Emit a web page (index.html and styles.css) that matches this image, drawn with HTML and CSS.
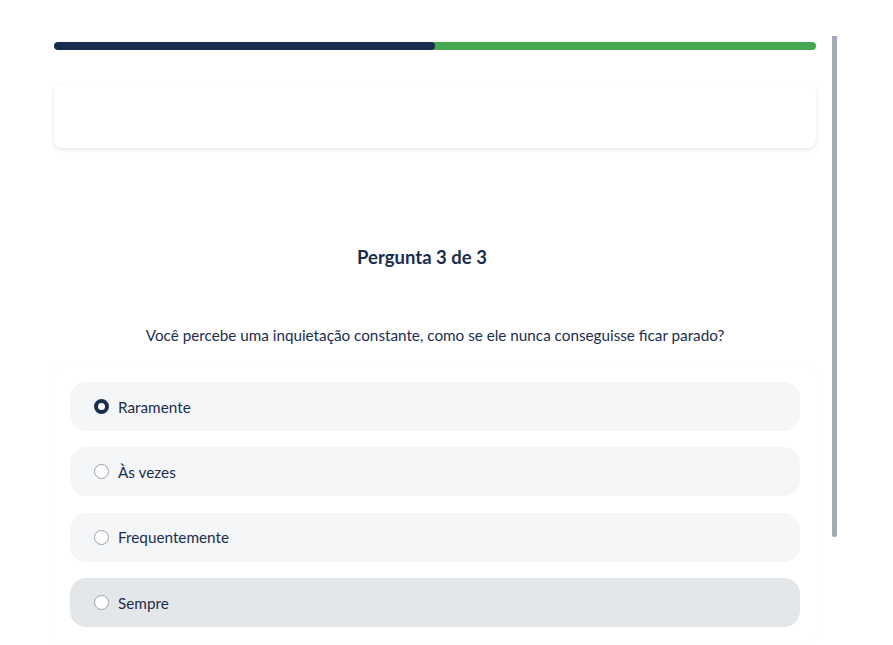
FILE: index.html
```html
<!DOCTYPE html>
<html lang="pt">
<head>
<meta charset="utf-8">
<link rel="stylesheet" href="styles.css">
</head>
<body>
<div class="page">
  <div class="progress"><div class="progress-fill" style="width:50%"></div></div>
  <div class="card-top"></div>
  <h2 class="title">Pergunta 3 de 3</h2>
  <p class="question">Você percebe uma inquietação constante, como se ele nunca conseguisse ficar parado?</p>
  <div class="options">
    <label class="option"><span class="radio checked"></span><span class="label">Raramente</span></label>
    <label class="option"><span class="radio"></span><span class="label">Às vezes</span></label>
    <label class="option"><span class="radio"></span><span class="label">Frequentemente</span></label>
    <label class="option hover"><span class="radio"></span><span class="label">Sempre</span></label>
  </div>
</div>
<div class="scroll-thumb"></div>
</body>
</html>
```
FILE: styles.css
```css
html, body { margin: 0; padding: 0; background: #fff; }
body {
  font-family: "Lato", "Noto Sans", sans-serif;
  color: #1b2d4f;
  width: 893px; height: 645px; overflow: hidden; position: relative;
}
.page {
  width: 762px;
  margin-left: 54px;
  padding-top: 42px;
}
.progress {
  height: 8px;
  background: #45a74f;
  border-radius: 4px;
  overflow: hidden;
}
.progress-fill {
  height: 100%;
  background: #1b2d4f;
  border-radius: 4px;
}
.card-top {
  margin-top: 34px;
  height: 64px;
  background: #fff;
  border-radius: 8px;
  box-shadow: 0 2px 5px rgba(0,0,0,0.09), 0 0 1px rgba(0,0,0,0.07);
}
.title {
  margin: 96px 0 0;
  padding-right: 26px;
  text-align: center;
  font-size: 18.5px;
  font-weight: 700;
  line-height: 26px;
}
.question {
  margin: 55px 0 0;
  text-align: center;
  font-size: 15.25px;
  line-height: 20px;
}
.options {
  margin-top: 21px;
  padding: 16px;
  border-radius: 8px;
  box-shadow: 0 0 2px rgba(0,0,0,0.06);
  display: flex;
  flex-direction: column;
  gap: 16.4px;
}
.option {
  height: 49px;
  border-radius: 16px;
  background: #f5f6f8;
  display: flex;
  align-items: center;
  padding-left: 24px;
  gap: 9px;
  font-size: 15.3px;
}
.option.hover { background: #e4e7ea; }
.radio {
  width: 15px; height: 15px;
  box-sizing: border-box;
  border-radius: 50%;
  border: 1px solid #9aa1ad;
  background: #fff;
}
.radio.checked {
  border: 4px solid #1b2d4f;
}
.scroll-thumb {
  position: absolute;
  left: 832px; top: 36px;
  width: 5px; height: 501px;
  background: #a2aab6;
  border-radius: 0 0 3px 3px;
}
```
